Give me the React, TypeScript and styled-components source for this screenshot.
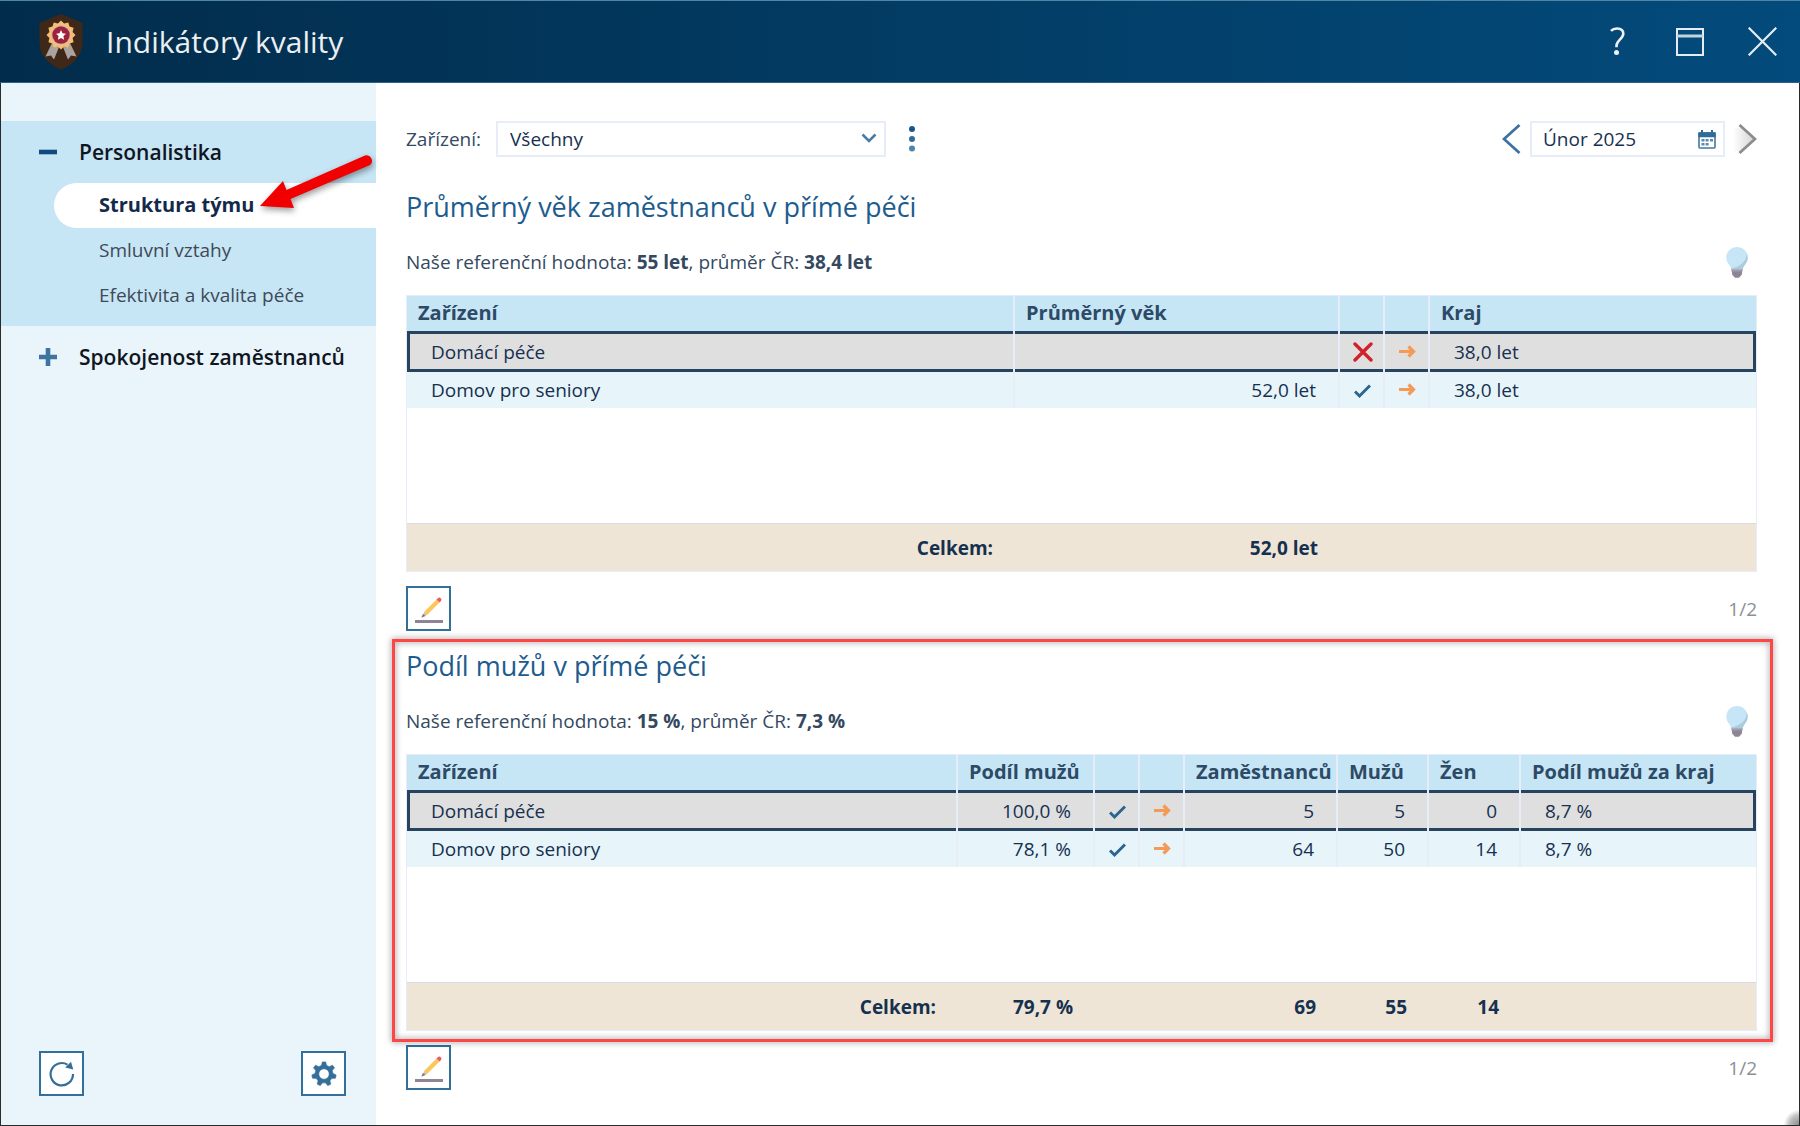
import React from 'react';
import styled, { createGlobalStyle, css } from 'styled-components';

const color = {
  ink: '#16304f',
  text: '#34495f',
  heading: '#1d5c8e',
  accent: '#356f99',
  panel: '#eaf5fb',
  panelStrong: '#c6e5f5',
  grid: '#e6edf8',
  rowAlt: '#e7f5fb',
  rowSelected: '#dfdfdf',
  selection: '#27435e',
  total: '#eee5d6',
  orange: '#f59957',
};

const GlobalStyle = createGlobalStyle`
  *, *::before, *::after { box-sizing: border-box; }
  body { margin: 0; background: #fff; }
  button, input, select { font: inherit; color: inherit; }
  svg { display: block; flex: none; }
`;

const Window = styled.div`
  position: relative;
  display: flex;
  flex-direction: column;
  min-height: 100vh;
  font-family: 'Open Sans', 'Noto Sans', sans-serif;
  font-size: 19px;
  line-height: 26px;
  color: ${color.ink};
  background: #fff;
`;

const TitleBar = styled.header`
  display: flex;
  align-items: center;
  height: 83px;
  padding: 0 23px 0 39px;
  border-top: 1px solid #4f86a8;
  border-bottom: 1px solid #2c6189;
  background: linear-gradient(90deg, #022c4b, #034b7c);
`;

const Title = styled.h1`
  flex: 1;
  margin: 0 0 0 23px;
  font-size: 30px;
  line-height: 40px;
  font-weight: 400;
  color: #eceff1;
`;

const WindowButtons = styled.div`
  display: flex;
  gap: 44px;
`;

const PlainButton = styled.button`
  display: flex;
  align-items: center;
  justify-content: center;
  padding: 0;
  border: 0;
  background: none;
  cursor: pointer;
`;

const Body = styled.div`
  flex: 1;
  display: flex;
  border: 1px solid #2a2a2a;
  border-top: 0;
`;

const Sidebar = styled.aside`
  flex: none;
  display: flex;
  flex-direction: column;
  width: 375px;
  padding-top: 38px;
  background: ${color.panel};
`;

const Group = styled.section<{ $open?: boolean }>`
  padding: 8px 0;
  background: ${(p) => (p.$open ? color.panelStrong : 'transparent')};
`;

const GroupHead = styled.button`
  display: flex;
  align-items: center;
  gap: 21px;
  width: 100%;
  height: 46px;
  padding: 0 0 0 37px;
  border: 0;
  background: none;
  font-size: 21px;
  font-weight: 600;
  color: #10151f;
  text-align: left;
  white-space: nowrap;
  cursor: pointer;
`;

const Items = styled.ul`
  margin: 0;
  padding: 8px 0 0 53px;
  list-style: none;
`;

const Item = styled.a<{ $current?: boolean }>`
  display: block;
  height: 45px;
  padding-left: 45px;
  line-height: 44px;
  color: #3e4a55;
  text-decoration: none;
  ${(p) =>
    p.$current &&
    css`
      border-radius: 23px 0 0 23px;
      background: #fff;
      font-size: 20px;
      font-weight: 700;
      color: #14294a;
    `}
`;

const SidebarTools = styled.div`
  display: flex;
  justify-content: space-between;
  margin-top: auto;
  padding: 0 30px 29px 38px;
`;

const IconButton = styled(PlainButton)`
  width: 45px;
  height: 45px;
  border: 2px solid #336f9b;
  background: #fff;
`;

const Main = styled.main`
  flex: 1;
  min-width: 0;
  padding: 38px 42px 30px 30px;
`;

const Toolbar = styled.div`
  display: flex;
  align-items: center;
  justify-content: space-between;
  height: 36px;
  margin-bottom: 33px;
`;

const ToolGroup = styled.div<{ $gap: number }>`
  display: flex;
  align-items: center;
  gap: ${(p) => p.$gap}px;
`;

const FieldLabel = styled.label`
  color: ${color.text};
`;

const SelectBox = styled.div`
  position: relative;
  width: 390px;
  svg {
    position: absolute;
    right: 9px;
    top: 12px;
    pointer-events: none;
  }
`;

const Select = styled.select`
  display: block;
  width: 100%;
  height: 36px;
  padding: 0 36px 0 12px;
  border: 2px solid ${color.grid};
  background: #fff;
  appearance: none;
`;

const DateBox = styled.div`
  display: flex;
  align-items: center;
  width: 195px;
  height: 36px;
  padding: 0 7px 0 11px;
  border: 2px solid ${color.grid};
`;

const DateInput = styled.input`
  flex: 1;
  min-width: 0;
  padding: 0;
  border: 0;
  outline: 0;
  background: none;
`;

const Indicator = styled.section<{ $highlight?: boolean }>`
  position: relative;
  & + & {
    margin-top: 18px;
  }
  ${(p) =>
    p.$highlight &&
    css`
      &::after {
        content: '';
        position: absolute;
        inset: -10px -16px 48px -14px;
        border: 3px solid #fd4645;
        filter: drop-shadow(0 0 3px rgba(0, 0, 0, 0.5));
        pointer-events: none;
      }
    `}
`;

const Heading = styled.h2`
  margin: 0 0 22px;
  font-size: 27px;
  line-height: 34px;
  font-weight: 400;
  color: ${color.heading};
`;

const Reference = styled.div`
  display: flex;
  align-items: center;
  justify-content: space-between;
  height: 32px;
  margin-bottom: 17px;
  padding-right: 9px;
  color: ${color.text};
`;

const ReferenceText = styled.p`
  margin: 0;
`;

const Table = styled.table`
  width: 100%;
  height: 277px;
  table-layout: fixed;
  border-collapse: separate;
  border-spacing: 0;
  border: 1px solid ${color.grid};
`;

const HeadCell = styled.th`
  height: 35px;
  padding: 0 0 1px 11px;
  border-right: 2px solid ${color.grid};
  background: ${color.panelStrong};
  font-size: 20px;
  font-weight: 700;
  color: #2d4a66;
  text-align: left;
  white-space: nowrap;
  &:last-child {
    border-right: 0;
  }
`;

type Align = 'left' | 'right' | 'center';

const Cell = styled.td<{ $align: Align }>`
  padding: ${(p) => (p.$align === 'center' ? '0 0 0 2px' : '0 22px 0 24px')};
  border-right: 2px solid ${color.grid};
  text-align: ${(p) => p.$align};
  white-space: nowrap;
  svg {
    margin: 0 auto;
  }
  &:last-child {
    border-right: 0;
  }
`;

const Row = styled.tr<{ $selected?: boolean }>`
  height: ${(p) => (p.$selected ? 41 : 36)}px;
  ${Cell} {
    background: ${(p) => (p.$selected ? color.rowSelected : color.rowAlt)};
    ${(p) =>
      p.$selected &&
      css`
        box-shadow: inset 0 3px ${color.selection}, inset 0 -3px ${color.selection};
        &:first-child {
          box-shadow: inset 0 3px ${color.selection}, inset 0 -3px ${color.selection}, inset 3px 0 ${color.selection};
        }
        &:last-child {
          box-shadow: inset 0 3px ${color.selection}, inset 0 -3px ${color.selection}, inset -3px 0 ${color.selection};
        }
      `}
  }
`;

const EmptyCell = styled.td`
  padding: 0;
`;

const TotalCell = styled.td`
  height: 48px;
  padding: 0 22px 0 0;
  border-top: 1px solid #dadbe0;
  background: ${color.total};
  font-weight: 700;
  text-align: right;
`;

const IndicatorFoot = styled.div`
  display: flex;
  align-items: center;
  justify-content: space-between;
  margin-top: 14px;
  color: #8b9096;
`;

const Pointer = styled.svg`
  position: absolute;
  left: 256px;
  top: 148px;
  filter: drop-shadow(1px 3px 3px rgba(0, 0, 0, 0.4));
  pointer-events: none;
`;

const Grip = styled.div`
  position: absolute;
  right: 1px;
  bottom: 1px;
  width: 15px;
  height: 15px;
  background: radial-gradient(circle at 100% 100%, #8a8a8a 0, rgba(150, 150, 150, 0.6) 45%, rgba(255, 255, 255, 0) 72%);
`;

const BADGE_TEETH = Array.from({ length: 24 }, (_, i) => {
  const a = (i * Math.PI) / 12 - Math.PI / 2;
  const r = i % 2 ? 12 : 14.5;
  return `${(22 + r * Math.cos(a)).toFixed(2)},${(21 + r * Math.sin(a)).toFixed(2)}`;
}).join(' ');

const Shield = () => (
  <svg width="44" height="56" viewBox="0 0 44 56" aria-hidden="true">
    <path d="M22 0 43.500 9v20c0 12-9 21-21.500 27C9.500 50 .5 41 .5 29V9z" fill="#402819" />
    <path d="m13 29-6.500 13.500 5.500-1 3 4L20 33zM31 29l6.500 13.500-5.500-1-3 4L24 33z" fill="#aaa39f" />
    <polygon points={BADGE_TEETH} fill="#f6be6f" />
    <circle cx="22" cy="21" r="10" fill="#d9b7b9" />
    <circle cx="22" cy="21" r="8.700" fill="#9f2338" />
    <path d="m22 16 1.500 3.300 3.500.4-2.600 2.400.7 3.600-3.100-1.800-3.100 1.800.7-3.600-2.600-2.400 3.500-.4z" fill="#fff" />
  </svg>
);

const HelpIcon = () => (
  <svg width="22" height="29" viewBox="0 0 22 29" fill="none" stroke="#eef2f5" strokeWidth="2.600">
    <path d="M1 3.800C2.500 2.200 4.500 1.500 7 1.500c4 0 6.300 2 6.300 5.300 0 5-6.800 6.200-6.800 12v1.500" />
    <circle cx="6.500" cy="25.500" r="2.500" fill="#eef2f5" stroke="none" />
  </svg>
);

const MaximizeIcon = () => (
  <svg width="28" height="28" viewBox="0 0 28 28" fill="none" stroke="#e6edf2" strokeWidth="2">
    <path d="M1 1h26v26H1z" />
    <path d="M1 8h26" stroke="#c3d3e0" strokeWidth="3" />
  </svg>
);

const CloseIcon = () => (
  <svg width="29" height="29" viewBox="0 0 29 29" fill="none" stroke="#e6edf2" strokeWidth="2.200">
    <path d="m.7.7 27.600 27.600M28.300.7.7 28.300" />
  </svg>
);

const ToggleIcon = ({ open }: { open?: boolean }) => (
  <svg width="20" height="20" viewBox="0 0 20 20" stroke={open ? '#0f4a80' : '#3d74a1'} strokeWidth="4.600">
    <path d={open ? 'M1 10h18' : 'M1 10h18M10 1v18'} />
  </svg>
);

const RefreshIcon = () => (
  <svg width="26" height="26" viewBox="0 0 26 26">
    <path d="M24 13A11.200 11.200 0 1 1 18.500 3.600" fill="none" stroke={color.accent} strokeWidth="2.200" />
    <path d="m22 .8 2.300 7.700-8.100-2z" fill={color.accent} />
  </svg>
);

const GEAR = Array.from({ length: 7 }, (_, i) => {
  const at = (offset: number, r: number) => {
    const a = ((i * 360) / 7 + offset - 90) * (Math.PI / 180);
    return `${(13 + r * Math.cos(a)).toFixed(2)} ${(13 + r * Math.sin(a)).toFixed(2)}`;
  };
  return `${i ? 'L' : 'M'}${at(-16, 9)}L${at(-8, 12.2)}L${at(8, 12.2)}L${at(16, 9)}`;
}).join('');

const GearIcon = () => (
  <svg width="26" height="26" viewBox="0 0 26 26">
    <path
      d={`${GEAR}ZM13 7.800a5.200 5.200 0 1 0 0 10.400a5.200 5.200 0 1 0 0-10.400z`}
      fill={color.accent}
      fillRule="evenodd"
      stroke={color.accent}
      strokeWidth="0.600"
      strokeLinejoin="round"
    />
  </svg>
);

const PencilIcon = () => (
  <svg width="28" height="28" viewBox="0 0 28 28">
    <path d="M0 25h28v3H0z" fill="#8f8496" />
    <path d="m9 17 12.500-12.500 3 3L12 20z" fill="#fbc65a" />
    <path d="m21.500 4.500 1.300-1.300a2.120 2.120 0 0 1 3 3l-1.300 1.300z" fill="#ea5a62" />
    <path d="m9 17 3 3-3.600 1.800z" fill="#dcb6a0" />
    <path d="m8 18.700 2.300 2.300-4 1.700z" fill="#7d7488" />
  </svg>
);

const BulbIcon = () => (
  <svg width="22" height="31" viewBox="0 0 22 31">
    <path d="M11 0C4.900 0 .3 4.700.3 10.500c0 3.500 1.500 5.800 3.300 8.100 1 1.300 1.500 2.700 1.700 4.400h11.400c.2-1.700.7-3.100 1.700-4.400 1.800-2.300 3.300-4.600 3.300-8.100C21.700 4.700 17.100 0 11 0z" fill="#c6e6f7" />
    <path d="M20.700 6c.5 8-6.700 14-15.700 15.500l.3 1.500h11.400c.2-1.700.7-3.100 1.700-4.400 1.800-2.300 3.300-4.600 3.300-8.100 0-1.600-.4-3.200-1-4.500z" fill="#aecbdb" />
    <path d="M5.500 22.700h11l-.8 5-2.700 3H9l-2.700-3z" fill="#8d8494" />
    <path d="M5.500 22.700h11l-.3 1.800H5.800z" fill="#a39aa9" />
  </svg>
);

const ChevronDown = () => (
  <svg width="16" height="12" viewBox="0 0 16 12" fill="none" stroke="#4a7ba5" strokeWidth="2.500">
    <path d="m1.500 1.500 6.500 6.500 6.500-6.500" />
  </svg>
);

const DotsIcon = () => (
  <svg width="6" height="26" viewBox="0 0 6 26">
    <circle cx="3" cy="3" r="3" fill="#1a5688" />
    <circle cx="3" cy="13" r="3" fill="#336c98" />
    <circle cx="3" cy="22.500" r="3" fill="#4f83a9" />
  </svg>
);

const PrevIcon = () => (
  <svg width="20" height="32" viewBox="0 0 20 32" fill="none" stroke="#3d72a0" strokeWidth="2.800">
    <path d="M17.500 2 2 16l15.500 14" />
  </svg>
);

const NextIcon = () => (
  <svg width="24" height="32" viewBox="1 0 24 32" fill="none">
    <defs>
      <linearGradient id="next-shade">
        <stop offset="0" stopColor="#fff" />
        <stop offset="1" stopColor="#d4d4d4" />
      </linearGradient>
    </defs>
    <path d="M1 5h9l12.500 11L10 28H1z" fill="url(#next-shade)" />
    <path d="M7.500 2 23 16 7.500 30" stroke="#8c8c8c" strokeWidth="2.800" />
  </svg>
);

const CalendarIcon = () => (
  <svg width="18" height="19" viewBox="0 0 18 19">
    <rect x="1" y="3" width="16" height="15" rx="1" fill="#fff" stroke="#42789f" strokeWidth="1.600" />
    <path d="M.3 2.300h17.400v5H.3zM3 0h2v3H3zM13 0h2v3h-2z" fill="#2f6c98" />
    <path d="M3.500 9h3v2.500h-3zM7.600 9h3v2.500h-3zM12 9h3v2.500h-3zM3.500 13h3v2.500h-3zM7.600 13h3v2.500h-3z" fill="#5a8bae" />
  </svg>
);

const CrossMark = () => (
  <svg width="20" height="20" viewBox="0 0 20 20" fill="none" stroke="#d2202d" strokeWidth="3.400" strokeLinecap="round">
    <path d="m2 2 16 16M18 2 2 18" />
  </svg>
);

const CheckMark = () => (
  <svg width="17" height="18" viewBox="0 0 17 18" fill="none" stroke="#2c6690" strokeWidth="3">
    <path d="m1 10.500 4.500 4.500L16 4.500" />
  </svg>
);

const ArrowMark = () => (
  <svg width="17" height="14" viewBox="0 0 17 14" fill="none" stroke={color.orange} strokeWidth="3.200">
    <path d="M0 6.500h15M9.500 1.500l5 5-5 5" />
  </svg>
);

type Column = { label: string; width?: number; align: Align };
type Mark = 'cross' | 'check' | 'arrow';
type Value = string | { mark: Mark };
type IndicatorData = {
  title: string;
  reference: string;
  average: string;
  columns: Column[];
  rows: Value[][];
  totals: string[];
  highlight?: boolean;
};

const marks: Record<Mark, () => React.JSX.Element> = {
  cross: CrossMark,
  check: CheckMark,
  arrow: ArrowMark,
};
const check: Value = { mark: 'check' };
const arrow: Value = { mark: 'arrow' };

const indicators: IndicatorData[] = [
  {
    title: 'Průměrný věk zaměstnanců v přímé péči',
    reference: '55 let',
    average: '38,4 let',
    columns: [
      { label: 'Zařízení', align: 'left' },
      { label: 'Průměrný věk', width: 325, align: 'right' },
      { label: '', width: 45, align: 'center' },
      { label: '', width: 45, align: 'center' },
      { label: 'Kraj', width: 326, align: 'left' },
    ],
    rows: [
      ['Domácí péče', '', { mark: 'cross' }, arrow, '38,0 let'],
      ['Domov pro seniory', '52,0 let', check, arrow, '38,0 let'],
    ],
    totals: ['Celkem:', '52,0 let', '', '', ''],
  },
  {
    title: 'Podíl mužů v přímé péči',
    reference: '15 %',
    average: '7,3 %',
    columns: [
      { label: 'Zařízení', align: 'left' },
      { label: 'Podíl mužů', width: 137, align: 'right' },
      { label: '', width: 45, align: 'center' },
      { label: '', width: 45, align: 'center' },
      { label: 'Zaměstnanců', width: 153, align: 'right' },
      { label: 'Mužů', width: 91, align: 'right' },
      { label: 'Žen', width: 92, align: 'right' },
      { label: 'Podíl mužů za kraj', width: 235, align: 'left' },
    ],
    rows: [
      ['Domácí péče', '100,0 %', check, arrow, '5', '5', '0', '8,7 %'],
      ['Domov pro seniory', '78,1 %', check, arrow, '64', '50', '14', '8,7 %'],
    ],
    totals: ['Celkem:', '79,7 %', '', '', '69', '55', '14', ''],
    highlight: true,
  },
];

const Col = styled.col<{ $width?: number }>`
  width: ${(p) => (p.$width ? `${p.$width}px` : 'auto')};
`;

function ValueView({ value }: { value: Value }) {
  if (typeof value === 'string') return <>{value}</>;
  const Icon = marks[value.mark];
  return <Icon />;
}

function IndicatorView({ data }: { data: IndicatorData }) {
  return (
    <Indicator $highlight={data.highlight}>
      <Heading>{data.title}</Heading>
      <Reference>
        <ReferenceText>
          Naše referenční hodnota: <b>{data.reference}</b>, průměr ČR: <b>{data.average}</b>
        </ReferenceText>
        <PlainButton type="button" aria-label="Nápověda k ukazateli">
          <BulbIcon />
        </PlainButton>
      </Reference>
      <Table>
        <colgroup>
          {data.columns.map((c, i) => (
            <Col key={i} $width={c.width} />
          ))}
        </colgroup>
        <thead>
          <tr>
            {data.columns.map((c, i) => (
              <HeadCell key={i} scope="col">
                {c.label}
              </HeadCell>
            ))}
          </tr>
        </thead>
        <tbody>
          {data.rows.map((row, r) => (
            <Row key={r} $selected={r === 0}>
              {row.map((value, i) => (
                <Cell key={i} $align={data.columns[i].align}>
                  <ValueView value={value} />
                </Cell>
              ))}
            </Row>
          ))}
          <tr>
            <EmptyCell colSpan={data.columns.length} />
          </tr>
        </tbody>
        <tfoot>
          <tr>
            {data.totals.map((t, i) => (
              <TotalCell key={i}>{t}</TotalCell>
            ))}
          </tr>
        </tfoot>
      </Table>
      <IndicatorFoot>
        <IconButton type="button" aria-label="Upravit">
          <PencilIcon />
        </IconButton>
        <span>1/2</span>
      </IndicatorFoot>
    </Indicator>
  );
}

export default function App() {
  return (
    <Window>
      <GlobalStyle />
      <TitleBar>
        <Shield />
        <Title>Indikátory kvality</Title>
        <WindowButtons>
          <PlainButton type="button" aria-label="Nápověda">
            <HelpIcon />
          </PlainButton>
          <PlainButton type="button" aria-label="Maximalizovat">
            <MaximizeIcon />
          </PlainButton>
          <PlainButton type="button" aria-label="Zavřít">
            <CloseIcon />
          </PlainButton>
        </WindowButtons>
      </TitleBar>
      <Body>
        <Sidebar>
          <nav>
            <Group $open>
              <GroupHead type="button" aria-expanded="true">
                <ToggleIcon open />
                Personalistika
              </GroupHead>
              <Items>
                <li>
                  <Item href="#struktura" $current aria-current="page">
                    Struktura týmu
                  </Item>
                </li>
                <li>
                  <Item href="#smlouvy">Smluvní vztahy</Item>
                </li>
                <li>
                  <Item href="#efektivita">Efektivita a kvalita péče</Item>
                </li>
              </Items>
            </Group>
            <Group>
              <GroupHead type="button" aria-expanded="false">
                <ToggleIcon />
                Spokojenost zaměstnanců
              </GroupHead>
            </Group>
          </nav>
          <SidebarTools>
            <IconButton type="button" aria-label="Obnovit">
              <RefreshIcon />
            </IconButton>
            <IconButton type="button" aria-label="Nastavení">
              <GearIcon />
            </IconButton>
          </SidebarTools>
        </Sidebar>
        <Main>
          <Toolbar>
            <ToolGroup $gap={23}>
              <ToolGroup $gap={15}>
                <FieldLabel htmlFor="facility">Zařízení:</FieldLabel>
                <SelectBox>
                  <Select id="facility" defaultValue="all">
                    <option value="all">Všechny</option>
                  </Select>
                  <ChevronDown />
                </SelectBox>
              </ToolGroup>
              <PlainButton type="button" aria-label="Další možnosti">
                <DotsIcon />
              </PlainButton>
            </ToolGroup>
            <ToolGroup $gap={8}>
              <PlainButton type="button" aria-label="Předchozí měsíc">
                <PrevIcon />
              </PlainButton>
              <DateBox>
                <DateInput aria-label="Období" defaultValue="Únor 2025" />
                <PlainButton type="button" aria-label="Vybrat období">
                  <CalendarIcon />
                </PlainButton>
              </DateBox>
              <PlainButton type="button" aria-label="Následující měsíc">
                <NextIcon />
              </PlainButton>
            </ToolGroup>
          </Toolbar>
          {indicators.map((data) => (
            <IndicatorView key={data.title} data={data} />
          ))}
        </Main>
      </Body>
      <Pointer width="122" height="66" viewBox="0 0 122 66" fill="#f10000" aria-hidden="true">
        <path d="M4 58 27 33l3.500 9L109 7.500a5.500 5.500 0 0 1 5 9.500L34.500 51l3.500 9z" />
      </Pointer>
      <Grip />
    </Window>
  );
}
